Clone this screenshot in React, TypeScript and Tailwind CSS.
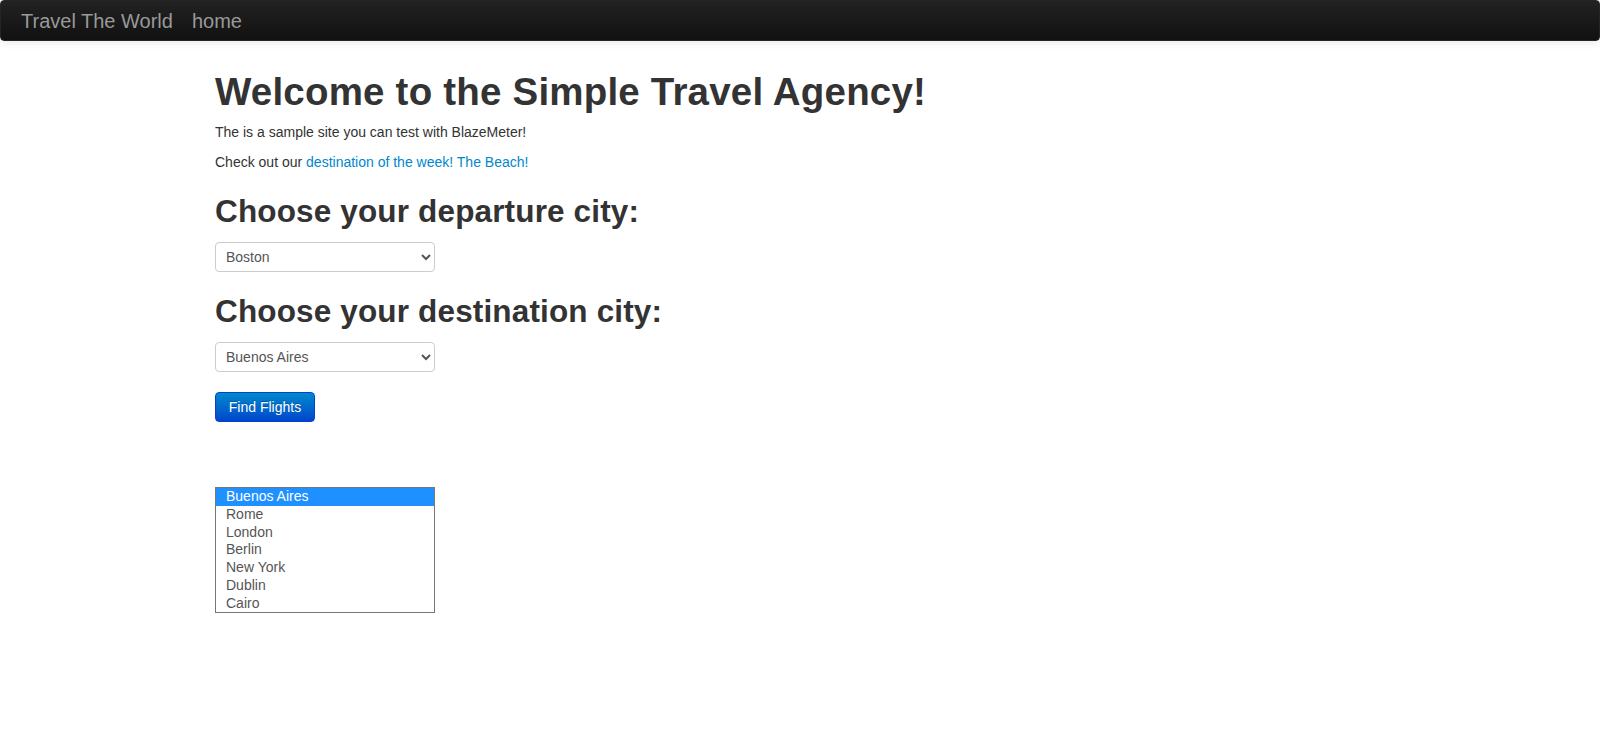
import React from "react";

const cities = ["Buenos Aires", "Rome", "London", "Berlin", "New York", "Dublin", "Cairo"];

const Navbar: React.FC = () => (
  <div className="flex h-[41px] items-center rounded-[4px] border border-[#252525] bg-gradient-to-b from-[#222222] to-[#111111] shadow-[0_1px_10px_rgba(0,0,0,0.1)]">
    <a href="#" className="ml-[20px] text-[20px] leading-[20px] text-[#999999]">
      Travel The World
    </a>
    <a href="#" className="ml-[19px] text-[20px] leading-[20px] text-[#999999]">
      home
    </a>
  </div>
);

const CitySelect: React.FC<{ options: string[]; value: string }> = ({ options, value }) => (
  <select
    defaultValue={value}
    className="mt-[11px] block h-[30px] w-[220px] rounded-[4px] border border-[#cccccc] bg-white px-[6px] text-[14px] text-[#555555]"
  >
    {options.map((o) => (
      <option key={o}>{o}</option>
    ))}
  </select>
);

export default function App() {
  return (
    <div className="min-h-[745px] bg-white font-['Liberation_Sans',Arial,sans-serif] text-[14px] leading-[20px] text-[#333333]">
      <Navbar />
      <div className="mx-auto w-[1170px]">
        <h1 className="mt-[31px] text-[38.5px] font-bold leading-[40px] tracking-[0.2px]">
          Welcome to the Simple Travel Agency!
        </h1>
        <p className="mt-[10px]">The is a sample site you can test with BlazeMeter!</p>
        <p className="mt-[10px]">
          Check out our{" "}
          <a href="#" className="text-[#0088cc]">
            destination of the week! The Beach!
          </a>
        </p>
        <form>
          <h2 className="mt-[19px] text-[31.5px] font-bold leading-[40px] tracking-[0.15px]">
            Choose your departure city:
          </h2>
          <CitySelect
            value="Boston"
            options={["Paris", "Philadelphia", "Boston", "Portland", "San Diego", "Mexico City", "São Paolo"]}
          />
          <h2 className="mt-[19px] text-[31.5px] font-bold leading-[40px] tracking-[0.15px]">
            Choose your destination city:
          </h2>
          <CitySelect value="Buenos Aires" options={cities} />
          <button
            type="button"
            className="mt-[20px] block h-[30px] w-[100px] rounded-[4px] border border-[#0044cc] bg-gradient-to-b from-[#0088cc] to-[#0044cc] text-[14px] text-white [text-shadow:0_-1px_0_rgba(0,0,0,0.25)]"
          >
            Find Flights
          </button>
        </form>
        <ul className="mt-[65px] w-[220px] border border-[#767676] bg-white">
          {cities.map((c, i) => (
            <li
              key={c}
              className={
                i === 0
                  ? "h-[17.75px] pl-[10px] text-[14px] leading-[17.75px] text-white bg-[#1e90ff]"
                  : "h-[17.75px] pl-[10px] text-[14px] leading-[17.75px] text-[#555555]"
              }
            >
              {c}
            </li>
          ))}
        </ul>
      </div>
    </div>
  );
}
